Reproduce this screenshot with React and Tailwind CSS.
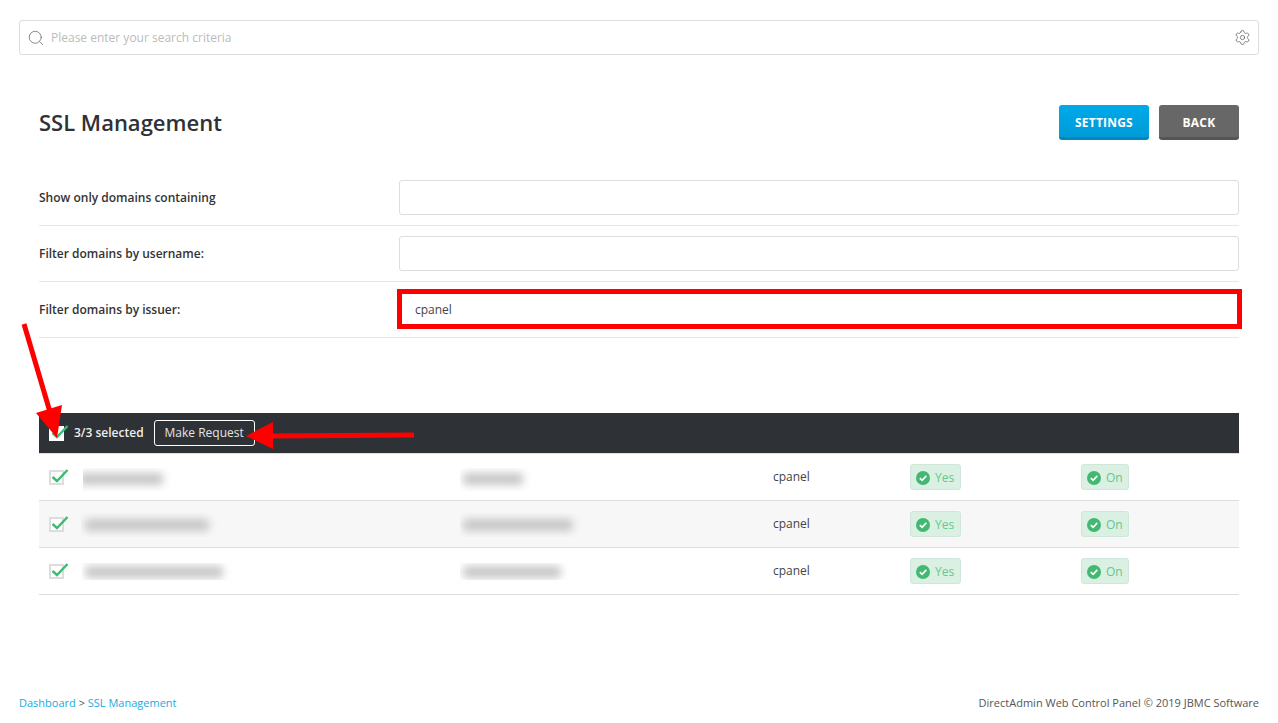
import React from "react";
import { Search, Settings } from "lucide-react";

const font = { fontFamily: '"Open Sans", sans-serif' };

function Box({ dark }) {
  return (
    <div className={`relative h-[15px] w-[15px] border-2 ${dark ? "border-white bg-white" : "border-[#dddddd] bg-white"}`}>
      <svg width="19" height="17" viewBox="0 0 19 17" className="absolute left-0 top-[-3px]">
        <path d="M1.5 8 L6 12 L16.5 1" fill="none" stroke="#3dbb74" strokeWidth="2.4" />
      </svg>
    </div>
  );
}

function Badge({ label, width }) {
  return (
    <div className={`flex h-[26px] ${width} items-center gap-[5px] rounded-[3px] border border-[#cfe6d9] bg-[#d9f0e2] pl-[5px] pt-[1px] text-[12px] text-[#62c98f]`}>
      <svg width="14" height="14" viewBox="0 0 14 14" className="shrink-0">
        <circle cx="7" cy="7" r="7" fill="#43b872" />
        <path d="M3.8 7.2 L6.1 9.4 L10.3 4.9" fill="none" stroke="#ffffff" strokeWidth="1.7" />
      </svg>
      <span>{label}</span>
    </div>
  );
}

function Blur({ patch, bar }) {
  return (
    <div className={`relative self-start overflow-hidden ${patch}`}>
      <div className={`absolute rounded-sm bg-[#c6c6c6] blur-[4px] ${bar}`} />
    </div>
  );
}

function Row({ alt, a, b, c, d }) {
  return (
    <div className={`grid h-[47px] grid-cols-[40px_381px_313px_137px_171px_158px] items-center border-b border-[#dddddd] ${alt ? "bg-[#f7f7f7]" : "bg-white"}`}>
      <div className="pl-[10px] pt-[1px]"><Box /></div>
      <Blur patch={a} bar={b} />
      <Blur patch={c} bar={d} />
      <div className="text-[12px] text-[#444444]">cpanel</div>
      <Badge label="Yes" width="w-[51px]" />
      <Badge label="On" width="w-[48px]" />
    </div>
  );
}

function FormRow({ label, value }) {
  return (
    <div className="flex h-[56px] items-center border-b border-[#e8e8e8]">
      <div className="w-[360px] text-[12px] font-semibold text-[#333333]">{label}</div>
      <div className="flex h-[35px] flex-1 items-center rounded-[3px] border border-[#dddddd] bg-white pl-[15px] text-[12px] text-[#444444]">{value}</div>
    </div>
  );
}

export default function App() {
  return (
    <div className="relative flex h-[723px] flex-col overflow-hidden bg-white px-[19px]" style={font}>
      <div className="mt-[20px] flex h-[35px] items-center rounded-[3px] border border-[#dddddd] pl-[7px] pr-[7px]">
        <Search size={18} strokeWidth={1} className="text-[#666666]" />
        <span className="ml-[6px] flex-1 text-[12px] text-[#bbbbbb]">Please enter your search criteria</span>
        <Settings size={17} strokeWidth={1} className="text-[#555555]" />
      </div>

      <div className="px-[20px]">
        <div className="mt-[50px] flex h-[35px] items-center justify-between">
          <h1 className="text-[22px] font-semibold text-[#2e3137]">SSL Management</h1>
          <div className="flex gap-[10px]">
            <div className="flex h-[35px] w-[90px] items-center justify-center rounded-[3px] border-b-[3px] border-[#0487bd] bg-gradient-to-b from-[#00a9e9] to-[#009bd8] pt-[3px] text-[12px] font-bold tracking-[0.2px] text-white">SETTINGS</div>
            <div className="flex h-[35px] w-[80px] items-center justify-center rounded-[3px] border-b-[3px] border-[#555555] bg-[#676767] pt-[3px] text-[12px] font-bold tracking-[0.2px] text-white">BACK</div>
          </div>
        </div>

        <div className="mt-[30px]">
          <FormRow label="Show only domains containing" />
          <FormRow label="Filter domains by username:" />
          <FormRow label="Filter domains by issuer:" value="cpanel" />
        </div>

        <div className="mt-[75px] flex h-[41px] items-center border-b border-[#dddddd] bg-[#2e3135] pl-[10px] text-[12px] text-white">
          <div className="pt-[1px]"><Box dark /></div>
          <span className="ml-[10px] font-semibold text-[#eeeeee]">3/3 selected</span>
          <div className="ml-[10px] flex h-[26px] w-[101px] items-center justify-center rounded-[3px] border border-white text-[#e4e4e4]">Make Request</div>
        </div>

        <Row
          a="ml-[4px] mt-[14px] h-[23px] w-[110px]"
          b="left-[-4px] top-[5px] h-[12px] w-[84px]"
          c="mt-[14px] h-[23px] w-[90px]"
          d="left-[3px] top-[5px] h-[12px] w-[60px]"
        />
        <Row
          alt
          a="ml-[2px] mt-[12px] h-[24px] w-[160px]"
          b="left-[4px] top-[6px] h-[12px] w-[124px]"
          c="mt-[12px] h-[24px] w-[140px]"
          d="left-[3px] top-[6px] h-[12px] w-[110px]"
        />
        <Row
          a="ml-[3px] mt-[15px] h-[17px] w-[175px]"
          b="left-[3px] top-[3px] h-[12px] w-[138px]"
          c="mt-[15px] h-[17px] w-[125px]"
          d="left-[3px] top-[3px] h-[12px] w-[98px]"
        />
      </div>

      <div className="mt-auto mb-[12px] flex items-center justify-between text-[11px] text-[#555555]">
        <div>
          <span className="text-[#1aa9df]">Dashboard</span> &gt; <span className="text-[#1aa9df]">SSL Management</span>
        </div>
        <div>DirectAdmin Web Control Panel © 2019 JBMC Software</div>
      </div>

      <div className="absolute left-[397px] top-[289px] h-[40px] w-[845px] border-[5px] border-[#ff0000]" />
      <svg className="pointer-events-none absolute left-0 top-0" width="1278" height="723" viewBox="0 0 1278 723">
        <path d="M24 324 L50 412" stroke="#ff0000" strokeWidth="5" fill="none" />
        <polygon points="36,413 62,405 57,438" fill="#ff0000" />
        <path d="M414 435 L270 436" stroke="#ff0000" strokeWidth="5" fill="none" />
        <polygon points="273,422 273,449 246,436" fill="#ff0000" />
      </svg>
    </div>
  );
}
